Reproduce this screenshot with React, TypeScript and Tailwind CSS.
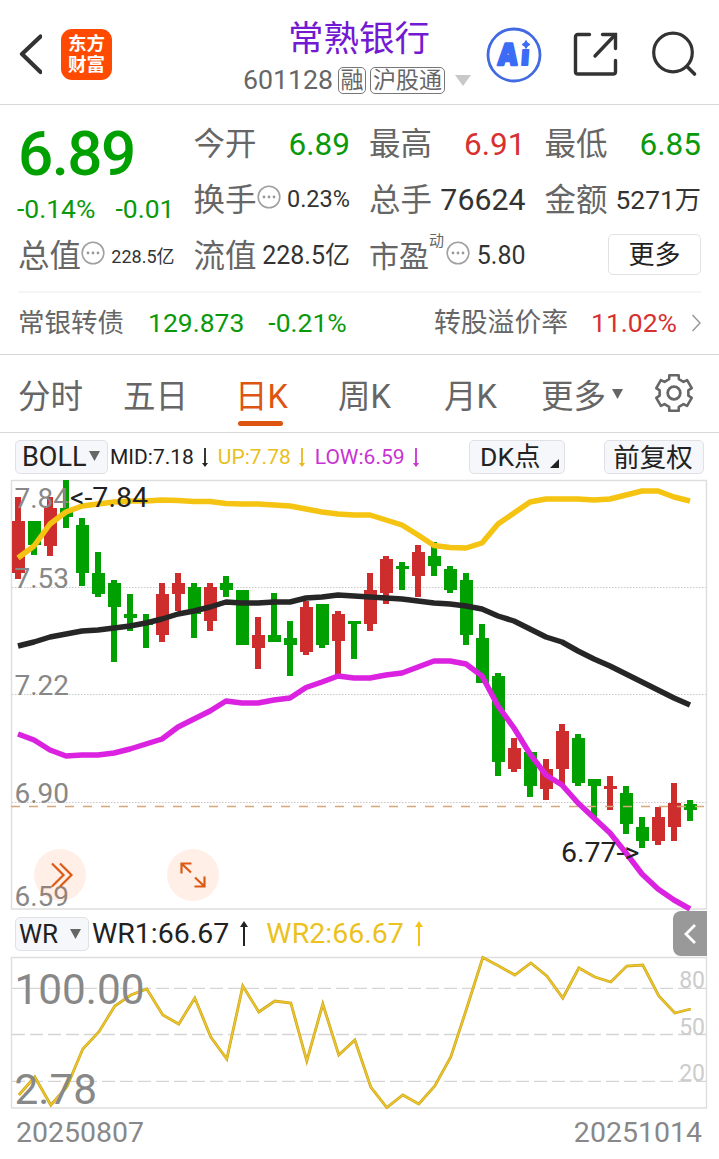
import React from 'react';

type Tone = 'up' | 'down';
// [high, bodyTop, bodyBottom, low, tone] in chart pixels
type Candle = [number, number, number, number, Tone];

const STEP = 16;
const FIRST_X = 18;

const candles: Candle[] = [
  [497, 521, 573, 579, 'up'],
  [521, 521, 545, 555, 'down'],
  [497, 508, 546, 556, 'up'],
  [480, 508, 517, 528, 'down'],
  [518, 525, 573, 586, 'down'],
  [552, 573, 594, 597, 'down'],
  [580, 583, 607, 662, 'down'],
  [594, 614, 618, 631, 'down'],
  [614, 622, 625, 648, 'down'],
  [583, 594, 635, 642, 'up'],
  [573, 583, 594, 611, 'up'],
  [583, 587, 614, 638, 'down'],
  [583, 587, 621, 631, 'up'],
  [576, 583, 590, 597, 'down'],
  [590, 590, 645, 645, 'down'],
  [617, 635, 648, 669, 'up'],
  [593, 635, 642, 642, 'down'],
  [621, 638, 645, 676, 'down'],
  [601, 607, 652, 655, 'up'],
  [604, 604, 645, 648, 'down'],
  [611, 614, 641, 675, 'up'],
  [621, 621, 624, 659, 'down'],
  [573, 590, 624, 631, 'up'],
  [556, 559, 593, 604, 'up'],
  [562, 566, 569, 590, 'down'],
  [545, 552, 576, 597, 'up'],
  [542, 556, 566, 576, 'down'],
  [566, 569, 590, 593, 'down'],
  [573, 580, 635, 645, 'down'],
  [624, 638, 683, 683, 'down'],
  [673, 676, 762, 776, 'down'],
  [738, 748, 769, 772, 'up'],
  [752, 752, 786, 797, 'down'],
  [759, 769, 789, 800, 'up'],
  [724, 731, 769, 786, 'up'],
  [734, 738, 783, 786, 'down'],
  [779, 779, 786, 818, 'down'],
  [776, 786, 789, 810, 'up'],
  [786, 793, 824, 834, 'down'],
  [817, 827, 841, 848, 'down'],
  [807, 817, 841, 845, 'up'],
  [783, 803, 827, 841, 'up'],
  [800, 804, 810, 821, 'down'],
];

const upper = [
  558, 546, 524, 512, 506, 504, 502, 501, 501, 500, 500.5, 501.5, 501.5, 503.5, 504, 504, 505, 506, 509, 512, 514, 515,
  515, 520, 525, 535, 545.5, 547.5, 548, 543, 524, 513, 502, 499, 499, 499, 500, 499, 495, 491, 491, 497, 501,
];

const middle = [
  646, 642, 637, 634, 631, 630, 628, 626, 623, 619, 614, 611, 607, 602, 603, 603, 602, 602, 598, 597, 595, 596, 597, 598,
  599, 601, 603, 604, 606, 609, 616, 621, 629, 637, 642, 651, 659, 666, 674, 682, 690, 698, 705,
];

const lower = [
  734, 740, 750, 756, 755, 755, 753, 749, 744, 739, 727, 719, 711, 701, 703, 703, 700, 698, 687.5, 682, 676, 678, 678,
  675, 673, 667, 661, 661, 664, 676, 706, 728, 754, 775, 785, 803, 818, 833, 853, 874, 889, 900, 909,
];

const wr = [
  1095, 1077, 1105, 1087, 1049, 1032, 1006, 995, 989, 1015, 1024, 998, 1037, 1059, 986, 1012, 1001, 1003, 1061, 1004,
  1055, 1040, 1087, 1107.5, 1095, 1104, 1086, 1057, 1008, 957.5, 966, 975, 963, 976, 998, 968, 977, 982, 966, 965, 996,
  1013, 1009,
];

const toPoints = (ys: number[], x0 = FIRST_X) => ys.map((y, i) => `${x0 + i * STEP},${y}`).join(' ');

const BackIcon = () => (
  <svg width="24" height="42" viewBox="0 0 24 42" fill="none">
    <path d="M22.5 3.5 L4 21 L22.5 39" stroke="#333" strokeWidth="4.2" strokeLinecap="round" strokeLinejoin="round" />
  </svg>
);

const AiIcon = () => (
  <svg width="56" height="56" viewBox="0 0 56 56">
    <circle cx="28" cy="28" r="26" fill="none" stroke="#4169e1" strokeWidth="2.8" />
    <g fill="#3b6cf6" stroke="#3b6cf6" strokeLinejoin="round" className="font-['Open_Sans'] font-extrabold">
      <text x="12.5" y="38" fontSize="30" strokeWidth="2.6" transform="skewX(-4) translate(2 0)" textLength="19" lengthAdjust="spacingAndGlyphs">A</text>
      <text x="35" y="38" fontSize="27" strokeWidth="2" transform="skewX(-4) translate(2 0)">ı</text>
    </g>
    <path d="M40 13.5 Q41 16.5 44 17.5 Q41 18.5 40 21.5 Q39 18.5 36 17.5 Q39 16.5 40 13.5Z" fill="#3b6cf6" stroke="#3b6cf6" />
  </svg>
);

const ShareIcon = () => (
  <svg width="46" height="46" viewBox="0 0 46 46" fill="none" stroke="#333" strokeWidth="3.4" strokeLinecap="round" strokeLinejoin="round">
    <path d="M16.5 2.5 H5 Q2.5 2.5 2.5 5 V40 Q2.5 42 5 42 H40 Q42.5 42 42.5 40 V28.5" />
    <path d="M29.5 2.5 H42.5 V16.5" strokeLinejoin="miter" />
    <path d="M41.5 3.5 L22 24" />
  </svg>
);

const SearchIcon = () => (
  <svg width="48" height="48" viewBox="0 0 48 48" fill="none" stroke="#333" strokeWidth="3.2" strokeLinecap="round">
    <circle cx="22" cy="21.5" r="19.3" />
    <path d="M36 35.5 L43.5 43" strokeWidth="3.6" />
  </svg>
);

const GearIcon = () => {
  const pts: string[] = [];
  for (let k = 0; k < 6; k++) {
    [[-14.6, 18.4], [14.6, 18.4], [19.5, 14.6], [40.5, 14.6]].forEach(([a, r]) => {
      const rad = ((k * 60 + a) * Math.PI) / 180;
      pts.push(`${(20 + r * Math.sin(rad)).toFixed(2)},${(20 - r * Math.cos(rad)).toFixed(2)}`);
    });
  }
  return (
    <svg width="40" height="40" viewBox="0 0 40 40" fill="none" stroke="#666" strokeWidth="2.6" strokeLinejoin="round">
      <polygon points={pts.join(' ')} />
      <circle cx="20" cy="20" r="6.3" strokeWidth="2.8" />
    </svg>
  );
};

const MoreDots = () => (
  <svg width="24" height="24" viewBox="0 0 24 24" className="shrink-0">
    <circle cx="12" cy="12" r="10.8" fill="none" stroke="#a0a0a0" strokeWidth="1.6" />
    <g fill="#999">
      <circle cx="7" cy="12" r="1.4" />
      <circle cx="12" cy="12" r="1.4" />
      <circle cx="17" cy="12" r="1.4" />
    </g>
  </svg>
);

const Caret = ({ className = '' }: { className?: string }) => (
  <svg width="11" height="10" viewBox="0 0 11 10" className={className}>
    <path d="M0 0 H11 L5.5 10Z" fill="currentColor" />
  </svg>
);

const Arrow = ({ up = false, className = '' }: { up?: boolean; className?: string }) => (
  <svg width="10" height="26" viewBox="0 0 10 26" className={className}>
    {up ? (
      <path d="M4 25 V6 H1 L5 0 L9 6 H6 V25Z" fill="currentColor" />
    ) : (
      <path d="M4.1 0 V15 H2 L5 19 L8 15 H5.9 V0Z" fill="currentColor" />
    )}
  </svg>
);

interface StatProps {
  label: string;
  value: string;
  valueClass: string;
  dots?: boolean;
}

const Stat: React.FC<StatProps> = ({ label, value, valueClass, dots }) => (
  <div className="flex h-14 items-center justify-between whitespace-nowrap">
    <div className="flex items-center">
      <span className="pt-[2px] text-[31.5px] text-[#666]">{label}</span>
      {dots && <div className="-mt-[6px]"><MoreDots /></div>}
    </div>
    <span className={valueClass}>{value}</span>
  </div>
);

const Header = () => (
  <header className="flex h-[105px] items-start border-b border-[#d8d8d8]">
    <div className="mt-[33px] ml-[18px]"><BackIcon /></div>
    <div className="mt-[29px] ml-[19px] flex h-[51px] w-[51px] flex-col items-center justify-center rounded-[11px] bg-[#ff4a00] text-[18.5px] leading-[21px] font-bold text-white">
      <span>东方</span>
      <span>财富</span>
    </div>
    <div className="ml-[131px] flex w-[229px] flex-col">
      <h1 className="mt-[16px] ml-[45px] text-[35.5px] leading-[46px] text-[#7319d2]">常熟银行</h1>
      <div className="mt-[2px] flex h-8 items-center text-[#666]">
        <span className="w-[95px] text-[26.7px] leading-8">601128</span>
        <span className="flex h-[27px] w-[28px] items-center justify-center rounded-[5px] border border-[#777] text-[23px] leading-none">融</span>
        <span className="ml-[4px] flex h-[27px] w-[75px] items-center justify-center rounded-[5px] border border-[#777] text-[23px] leading-none">沪股通</span>
        <svg width="16" height="11" viewBox="0 0 16 11" className="ml-[10px]"><path d="M0 0 H16 L8 11Z" fill="#c8c8c8" /></svg>
      </div>
    </div>
    <div className="mt-[27px] ml-[14px]"><AiIcon /></div>
    <div className="mt-[32px] ml-[31px]"><ShareIcon /></div>
    <div className="mt-[31px] ml-[32px]"><SearchIcon /></div>
  </header>
);

const Quote = () => (
  <section className="h-[250px] border-b border-[#d8d8d8] px-[18px] pt-[11px]">
    <div className="grid grid-cols-4 gap-x-[19px]">
      <div className="flex flex-col whitespace-nowrap">
        <div className="h-[68px] text-[62px] leading-[76px] font-medium tracking-[-1.6px] text-[#00a000]">6.89</div>
        <div className="flex h-[44px] items-center justify-between text-[26.5px] leading-[44px] text-[#0a990a]">
          <span className="-ml-px pt-[5px]">-0.14%</span>
          <span className="pt-[5px]">-0.01</span>
        </div>
        <Stat label="总值" value="228.5亿" valueClass="text-[18px] text-[#333]" dots />
      </div>
      <div className="flex flex-col">
        <Stat label="今开" value="6.89" valueClass="pt-px text-[31.5px] text-[#0a990a]" />
        <Stat label="换手" value="0.23%" valueClass="text-[23.5px] text-[#333]" dots />
        <Stat label="流值" value="228.5亿" valueClass="text-[25px] text-[#333]" />
      </div>
      <div className="flex flex-col">
        <Stat label="最高" value="6.91" valueClass="pt-px text-[31.5px] text-[#d63031]" />
        <Stat label="总手" value="76624" valueClass="text-[30.3px] text-[#333]" />
        <div className="flex h-14 items-center justify-between whitespace-nowrap">
          <div className="flex items-center text-[#666]">
            <span className="pt-px text-[30px]">市盈</span>
            <span className="-mt-[30px] text-[15px]">动</span>
            <div className="-mt-[6px] ml-0.5"><MoreDots /></div>
          </div>
          <span className="text-[25px] text-[#333]">5.80</span>
        </div>
      </div>
      <div className="flex flex-col">
        <Stat label="最低" value="6.85" valueClass="pt-px text-[31.5px] text-[#0a990a]" />
        <Stat label="金额" value="5271万" valueClass="pt-px text-[26.3px] text-[#333]" />
        <button className="mt-[6px] flex h-[41px] w-[93px] items-center justify-center self-end rounded-[5px] border border-[#e2e2e2] text-[26px] leading-none text-[#222]">更多</button>
      </div>
    </div>
    <div className="mt-[7px] flex h-[62px] items-center border-t-2 border-[#f5f5f5] whitespace-nowrap text-[26.5px]">
      <span className="text-[#666]">常银转债</span>
      <span className="ml-[24px] text-[#0a990a]">129.873</span>
      <span className="ml-[24px] text-[#0a990a]">-0.21%</span>
      <span className="ml-auto pt-px text-[26.8px] text-[#666]">转股溢价率</span>
      <span className="ml-[23px] text-[#d63031]">11.02%</span>
      <svg width="10" height="18" viewBox="0 0 10 18" fill="none" className="ml-[14px]"><path d="M1.5 1 L9 9 L1.5 17" stroke="#999" strokeWidth="1.5" /></svg>
    </div>
  </section>
);

const Tabs = () => (
  <nav className="flex h-[78px] items-center border-b border-[#d8d8d8] pl-[18px] text-[32.5px] leading-[48px] whitespace-nowrap text-[#666]">
    <span className="w-[105px] pt-[6px]">分时</span>
    <span className="w-[112px] pt-[6px]">五日</span>
    <span className="relative w-[103px] pt-[6px] text-[#dd5510]">
      日K
      <i className="absolute -bottom-[5px] left-[3px] h-[5px] w-[45px] rounded-full bg-[#dd5510]" />
    </span>
    <span className="w-[106px] pt-[6px]">周K</span>
    <span className="w-[97px] pt-[6px]">月K</span>
    <span className="pt-[6px]">更多</span>
    <Caret className="ml-[6px]" />
    <div className="-mt-px ml-[31px]"><GearIcon /></div>
  </nav>
);

const pill = 'flex items-center rounded-[5px] border border-[#dfe1e5] bg-[#f5f7fa] text-[#222]';

const BollBar = () => (
  <div className="flex h-[47px] items-center pl-[15px] whitespace-nowrap">
    <div className={`${pill} h-[34px] w-[93px] pl-[6px] text-[27px]`}>
      <span className="pt-px">BOLL</span><Caret className="-mt-px ml-[3px] text-[#666]" />
    </div>
    <div className="ml-0.5 flex w-[359px] items-center text-[21px]">
      <span className="pt-[2px] text-[#222]">MID:7.18</span>
      <Arrow className="mt-2 ml-[6px] text-[#222]" />
      <span className="ml-[8px] pt-[2px] text-[#e8c020]">UP:7.78</span>
      <Arrow className="mt-2 ml-[6px] text-[#e8b820]" />
      <span className="ml-[8px] pt-[2px] text-[#c832d2]">LOW:6.59</span>
      <Arrow className="mt-2 ml-[6px] text-[#c832d2]" />
    </div>
    <div className={`${pill} h-[34px] w-[96px] pl-[10px] text-[26.5px]`}>
      <span className="pt-px">DK点</span>
      <svg width="9" height="9" viewBox="0 0 9 9" className="mt-[14px] ml-[9px]"><path d="M9 0 V9 H0Z" fill="#222" /></svg>
    </div>
    <div className={`${pill} ml-[39px] h-[34px] w-[100px] justify-center pt-[2px] pr-[2px] text-[26.5px]`}>前复权</div>
  </div>
);

const KChart = () => (
  <svg width="719" height="430" viewBox="0 480 719 430" className="block overflow-visible">
    <g stroke="#c8c8c8" strokeDasharray="1.5 1.5">
      <path d="M12 587.5 H706 M12 694.5 H706 M12 802.5 H706" />
    </g>
    <path d="M11.5 480.5 H706.5 V909 H11.5Z" fill="none" stroke="#dedede" strokeWidth="1.4" />
    {candles.map(([high, top, bottom, low, tone], i) => {
      const x = FIRST_X + i * STEP;
      return (
        <g key={i} fill={tone === 'up' ? '#cd2d2d' : '#00a000'} shapeRendering="crispEdges">
          <rect x={x - 3} y={high} width="6" height={low - high} />
          <rect x={x - 6} y={top} width="13" height={bottom - top} />
        </g>
      );
    })}
    <path d="M11 806.5 H706" stroke="#d8a878" strokeWidth="1.4" strokeDasharray="9 9" />
    <g fill="none" strokeWidth="5.5" strokeLinejoin="round">
      <polyline points={toPoints(upper)} stroke="#f5c311" />
      <polyline points={toPoints(middle)} stroke="#262626" />
      <polyline points={toPoints(lower)} stroke="#da22e0" />
    </g>
    <g fill="#888" fontSize="28">
      <text x="14.5" y="508">7.84</text>
      <text x="14.5" y="588">7.53</text>
      <text x="14.5" y="695">7.22</text>
      <text x="14.5" y="803">6.90</text>
      <text x="14.5" y="906">6.59</text>
    </g>
    <g fill="#222" fontSize="28.5">
      <text x="70" y="507">&lt;-7.84</text>
      <text x="561" y="862">6.77-&gt;</text>
    </g>
    <g fill="#ff6414" fillOpacity="0.1">
      <circle cx="60" cy="875" r="26" />
      <circle cx="193" cy="875" r="26" />
    </g>
    <g fill="none" stroke="#dd5a15" strokeWidth="2.2">
      <path d="M52 863.5 L63.5 875 L52 886.5 M60 863.5 L71.5 875 L60 886.5" />
      <path d="M191.5 863.5 H181.5 V873.5 M182 864 L191 872.5 M194.5 886.5 H204.5 V876.5 M204 886 L195 877.5" />
    </g>
  </svg>
);

const WrBar = () => (
  <div className="flex h-[47px] items-center pl-[15px] whitespace-nowrap">
    <div className={`${pill} h-[34px] w-[74px] pl-[3px] text-[26px]`}>
      <span className="pt-px">WR</span><Caret className="ml-[12px] text-[#666]" />
    </div>
    <div className="ml-[3px] flex items-center text-[28.5px]">
      <span className="pt-px text-[#222]">WR1:66.67</span>
      <Arrow up className="ml-[10px] text-[#222]" />
      <span className="ml-[17px] pt-px text-[#ebc21e]">WR2:66.67</span>
      <Arrow up className="ml-[10px] text-[#f5c311]" />
    </div>
    <div className="mr-[12px] ml-auto flex h-[45px] w-[34px] items-center justify-center rounded-l-[8px] bg-[#999]">
      <svg width="14" height="22" viewBox="0 0 14 22" fill="none"><path d="M12 2 L3 11 L12 20" stroke="#fff" strokeWidth="2.8" /></svg>
    </div>
  </div>
);

const WrChart = () => (
  <svg width="719" height="152" viewBox="0 957 719 152" className="block overflow-visible">
    <g stroke="#d5d5d5" strokeWidth="1.3" strokeDasharray="13 5">
      <path d="M12 988.3 H706 M12 1034.5 H706 M12 1081.3 H706" />
    </g>
    <path d="M11.5 957.5 H706.5 V1108 H11.5Z" fill="none" stroke="#dedede" strokeWidth="1.4" />
    <polyline points={toPoints(wr, 18.8)} fill="none" stroke="#c9a31c" strokeWidth="2.8" />
    <polyline points={toPoints(wr, 18.8)} fill="none" stroke="#edc62a" strokeWidth="1.5" />
    <g fill="#888" fontSize="42.3">
      <text x="14.5" y="1004">100.00</text>
      <text x="14.5" y="1104">2.78</text>
    </g>
    <g fill="#ccc" fontSize="23" textAnchor="end">
      <text x="705" y="988">80</text>
      <text x="705" y="1035">50</text>
      <text x="705" y="1081">20</text>
    </g>
  </svg>
);

export default function App() {
  return (
    <div className="h-[1159px] w-[719px] overflow-hidden bg-white font-[Roboto,'Noto_Sans_CJK_SC',sans-serif] font-normal">
      <Header />
      <Quote />
      <Tabs />
      <BollBar />
      <KChart />
      <WrBar />
      <WrChart />
      <div className="flex justify-between pr-[17px] pl-[16px] text-[28.5px] leading-[48px] text-[#888]">
        <span>20250807</span>
        <span>20251014</span>
      </div>
    </div>
  );
}
